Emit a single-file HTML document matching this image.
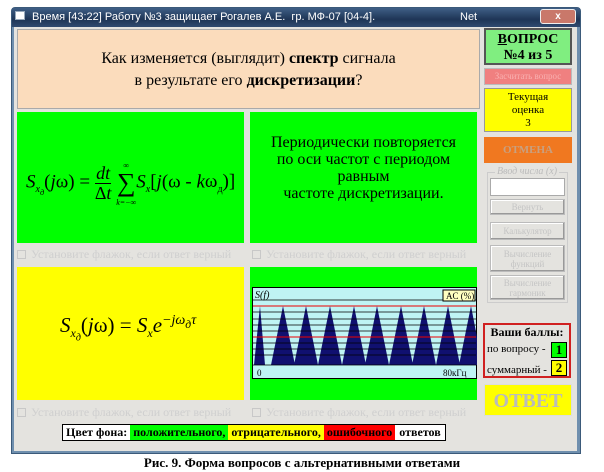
<!DOCTYPE html><html><head><meta charset="utf-8"><style>
*{margin:0;padding:0;box-sizing:border-box}
body{width:604px;height:472px;background:#fff;position:relative;overflow:hidden;font-family:"Liberation Serif",serif}
.a{position:absolute}
.win{left:11px;top:7px;width:570px;height:447px;background:#6f8fae;border:1px solid #3b5a7a;border-radius:4px 4px 0 0}
.tb{left:12px;top:8px;width:568px;height:19px;background:linear-gradient(#3f5f86,#1e3556 60%,#2f4a70);color:#fff;font:11px "Liberation Sans",sans-serif;line-height:18px;padding-left:20px}
.cl{left:14px;top:27px;width:563px;height:424px;background:#e4e3df}
.g{background:#00ff00}.y{background:#ffff00}
.ck{font:12px "Liberation Serif",serif;color:#cfcfcf;white-space:nowrap}
.ck span{display:inline-block;width:9px;height:9px;border:1px solid #c8c8c8;margin-right:5px;vertical-align:-1px}
.btn{border:1px solid #bbb;box-shadow:inset -1px -1px #999,inset 1px 1px #fff;color:#c4c4c4;font-size:9px;text-align:center;line-height:10px}
.c{text-align:center}
</style></head><body>
<div class="a win"></div>
<div class="a tb">Время [43:22] Работу №3 защищает Рогалев А.Е.&nbsp; гр. МФ-07 [04-4].<span style="position:absolute;left:448px">Net</span></div>
<div class="a" style="left:15px;top:11px;width:10px;height:9px;background:#fff;border:1px solid #9ab"></div>
<div class="a" style="left:540px;top:9px;width:36px;height:15px;background:#c9786a;border-radius:3px;border:1px solid #eee;color:#fff;font:bold 10px sans-serif;text-align:center;line-height:13px">x</div>
<div class="a cl"></div>
<div class="a c" style="left:17px;top:29px;width:463px;height:80px;background:#fbdcbc;border:1px solid #aaa;font-size:16px;line-height:22px;padding-top:18px">Как изменяется (выглядит) <b>спектр</b> сигнала<br>в результате его <b>дискретизации</b>?</div>
<div class="a g" style="left:17px;top:112px;width:227px;height:131px"></div>
<div class="a" style="left:26px;top:158px;font-size:19px;font-style:italic;white-space:nowrap">S<sub style="font-size:10px">x<sub>д</sub></sub><span style="font-style:normal">(</span>j<span style="font-style:normal">ω) = </span><span style="display:inline-block;text-align:center;vertical-align:middle;line-height:19px;font-size:18px"><span style="display:block;border-bottom:1px solid #000">dt</span><span style="font-style:normal">Δ</span>t</span> <span style="display:inline-block;vertical-align:middle;text-align:center;line-height:10px"><span style="font-size:8px;font-style:normal">∞</span><br><span style="font-size:26px;font-style:normal;line-height:24px">∑</span><br><span style="font-size:8px">k=−∞</span></span>S<sub style="font-size:10px">x</sub><span style="font-style:normal">[</span>j<span style="font-style:normal">(ω - </span>k<span style="font-style:normal">ω<sub style="font-size:10px">д</sub>)]</span></div>
<div class="a g c" style="left:250px;top:112px;width:227px;height:131px;font:16px 'Liberation Serif',serif;line-height:17px;padding-top:22px">Периодически повторяется<br>по оси частот с периодом<br>равным<br>частоте дискретизации.</div>
<div class="a ck" style="left:17px;top:247px"><span></span>Установите флажок, если ответ верный</div>
<div class="a ck" style="left:252px;top:247px"><span></span>Установите флажок, если ответ верный</div>
<div class="a y" style="left:17px;top:267px;width:227px;height:133px"></div>
<div class="a" style="left:60px;top:313px;font-size:21px;font-style:italic;white-space:nowrap">S<sub style="font-size:12px">x<sub>д</sub></sub><span style="font-style:normal">(</span>j<span style="font-style:normal">ω) = </span>S<sub style="font-size:12px">x</sub>e<sup style="font-size:14px">−jω<sub>д</sub>τ</sup></div>
<div class="a g" style="left:250px;top:267px;width:227px;height:133px"></div>
<svg class="a" style="left:252px;top:287px" width="225" height="92">
<rect x="0" y="0" width="225" height="92" fill="#bff4f4" stroke="#000" stroke-width="2"/>
<g fill="#101070">
<path d="M2 78 L8 19 L13 78Z"/><path d="M19 78 L31 19 L43 78Z"/><path d="M42 78 L54 19 L66 78Z"/>
<path d="M66 78 L78 19 L90 78Z"/><path d="M90 78 L102 19 L114 78Z"/><path d="M113 78 L125 19 L137 78Z"/><path d="M137 78 L149 19 L161 78Z"/><path d="M160 78 L172 19 L184 78Z"/><path d="M184 78 L196 19 L208 78Z"/><path d="M207 78 L219 19 L225 50 L225 78Z"/>
</g>
<g stroke="#000" stroke-width="0.8"><line x1="1" y1="13" x2="224" y2="13"/><line x1="1" y1="25" x2="224" y2="25"/><line x1="1" y1="32" x2="224" y2="32"/><line x1="1" y1="38" x2="224" y2="38"/><line x1="1" y1="44" x2="224" y2="44"/><line x1="1" y1="56" x2="224" y2="56"/><line x1="1" y1="62" x2="224" y2="62"/><line x1="1" y1="68" x2="224" y2="68"/><line x1="1" y1="78" x2="224" y2="78"/></g>
<line x1="1" y1="19" x2="224" y2="19" stroke="#e00"/><line x1="1" y1="50" x2="224" y2="50" stroke="#e00"/>
<text x="3" y="11" font-size="10" font-style="italic" font-family="Liberation Serif">S(f)</text>
<rect x="191" y="3" width="32" height="11" fill="#ffffc0" stroke="#000"/><text x="194" y="12" font-size="9" font-family="Liberation Serif">AC (%)</text>
<text x="5" y="89" font-size="9" font-family="Liberation Serif">0</text><text x="191" y="89" font-size="9" font-family="Liberation Serif">80кГц</text>
</svg>
<div class="a ck" style="left:17px;top:405px"><span></span>Установите флажок, если ответ верный</div>
<div class="a ck" style="left:252px;top:405px"><span></span>Установите флажок, если ответ верный</div>
<div class="a c" style="left:484px;top:28px;width:88px;height:37px;background:#80ee80;border:2px solid #555;font-weight:bold;font-size:14px;line-height:16px;padding-top:2px"><u>В</u>ОПРОС<br>№4 из 5</div>
<div class="a c" style="left:484px;top:68px;width:88px;height:17px;background:#f08080;border:1px solid #bbb;color:#f9b0b0;font-size:9px;line-height:15px">Засчитать вопрос</div>
<div class="a y c" style="left:484px;top:88px;width:88px;height:44px;border:1px solid #999;font-size:11px;line-height:13px;padding-top:2px">Текущая<br>оценка<br>3</div>
<div class="a c" style="left:484px;top:137px;width:88px;height:26px;background:#f07820;color:#c8a080;font-size:11px;font-weight:bold;line-height:26px">ОТМЕНА</div>
<div class="a" style="left:487px;top:172px;width:81px;height:131px;border:1px solid #ccc"></div>
<div class="a" style="left:495px;top:166px;background:#e4e3df;color:#bbb;font-size:10px;font-style:italic;padding:0 2px">Ввод числа (х)</div>
<div class="a" style="left:490px;top:178px;width:75px;height:18px;background:#fff;border:1px solid #aaa"></div>
<div class="a btn" style="left:490px;top:199px;width:75px;height:16px;line-height:14px">Вернуть</div>
<div class="a btn" style="left:490px;top:222px;width:75px;height:18px;line-height:16px">Калькулятор</div>
<div class="a btn" style="left:490px;top:245px;width:75px;height:27px;padding-top:3px">Вычисление<br>функций</div>
<div class="a btn" style="left:490px;top:275px;width:75px;height:25px;padding-top:2px">Вычисление<br>гармоник</div>
<div class="a" style="left:483px;top:323px;width:88px;height:55px;border:2px solid #d02020;font-size:11px;line-height:13px;padding:1px 2px">
<div class="c" style="font-weight:bold;font-size:12px">Ваши баллы:</div>
<div style="margin-top:4px">по вопросу - <span class="a g c" style="left:66px;top:17px;width:16px;height:16px;border:1px solid #000;font-weight:bold;font-size:13px;line-height:14px">1</span></div>
<div style="margin-top:8px">суммарный - <span class="a y c" style="left:66px;top:35px;width:16px;height:16px;border:1px solid #000;font-weight:bold;font-size:13px;line-height:14px">2</span></div></div>
<div class="a y c" style="left:484px;top:384px;width:88px;height:32px;color:#bbb;font-weight:bold;font-size:20px;line-height:32px;border:1px solid #ddd">ОТВЕТ</div>
<div class="a" style="left:62px;top:424px;height:17px;border:1px solid #000;background:#fff;font-size:12px;font-weight:bold;line-height:15px;white-space:nowrap;display:flex">
<span style="padding:0 3px">Цвет фона:</span><span class="g" style="padding:0 3px">положительного,</span><span class="y" style="padding:0 3px">отрицательного,</span><span style="background:#f00;padding:0 3px">ошибочного</span><span style="padding:0 4px">ответов</span></div>
<div class="a c" style="left:0;top:455px;width:604px;font-size:13px;font-weight:bold">Рис. 9. Форма вопросов с альтернативными ответами</div>
</body></html>
